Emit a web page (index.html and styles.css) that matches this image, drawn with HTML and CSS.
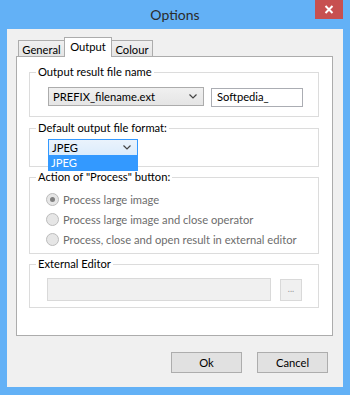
FILE: index.html
```html
<!DOCTYPE html>
<html>
<head>
<meta charset="utf-8">
<link rel="stylesheet" href="styles.css">
</head>
<body>
<div class="window">
  <div class="titlebar">
    <span></span>
    <span class="title">Options</span>
    <span class="close"><svg width="10" height="9" viewBox="0 0 10 9"><path d="M1.5 1 L8.5 8 M8.5 1 L1.5 8" stroke="#fff" stroke-width="2" fill="none"/></svg></span>
  </div>
  <div class="client">
    <div class="tabs">
      <div class="tab t-general">General</div>
      <div class="tab t-output active">Output</div>
      <div class="tab t-colour">Colour</div>
    </div>
    <div class="panel">
      <fieldset class="group g1">
        <legend>Output result file name</legend>
        <div class="body row">
          <div class="combo c-prefix"><span>PREFIX_filename.ext</span><svg class="chev" width="8" height="5" viewBox="0 0 8 5"><path d="M0.5 0.5 L4 4 L7.5 0.5" stroke="#444" stroke-width="1.2" fill="none"/></svg></div>
          <div class="textbox">Softpedia_</div>
        </div>
      </fieldset>
      <fieldset class="group g2">
        <legend>Default output file format:</legend>
        <div class="body">
          <div class="dropwrap">
            <div class="combo c-jpeg"><span>JPEG</span><svg class="chev" width="8" height="5" viewBox="0 0 8 5"><path d="M0.5 0.5 L4 4 L7.5 0.5" stroke="#444" stroke-width="1.2" fill="none"/></svg></div>
            <div class="droplist"><div class="item">JPEG</div></div>
          </div>
        </div>
      </fieldset>
      <fieldset class="group g3">
        <legend>Action of "Process" button:</legend>
        <div class="body">
          <div class="radio"><span class="dot checked"></span>Process large image</div>
          <div class="radio"><span class="dot"></span>Process large image and close operator</div>
          <div class="radio"><span class="dot"></span>Process, close and open result in external editor</div>
        </div>
      </fieldset>
      <fieldset class="group g4">
        <legend>External Editor</legend>
        <div class="body row">
          <div class="field"></div>
          <div class="browse">...</div>
        </div>
      </fieldset>
    </div>
    <div class="buttons">
      <div class="btn">Ok</div>
      <div class="btn">Cancel</div>
    </div>
  </div>
</div>
</body>
</html>
```
FILE: styles.css
```css
html, body {
  margin: 0;
  padding: 0;
}
body {
  font-family: Lato, "Noto Sans", sans-serif;
  font-size: 11.2px;
  color: #000;
  white-space: nowrap;
}
.window {
  width: 350px;
  height: 395px;
  box-sizing: border-box;
  background: #63b1f6;
  padding: 0 7px 8px 7px;
  display: flex;
  flex-direction: column;
}
.titlebar {
  height: 29px;
  display: grid;
  grid-template-columns: 1fr auto 1fr;
  align-items: start;
}
.title {
  font-size: 14px;
  color: #2b2b2b;
  line-height: 15px;
  padding-top: 7px;
}
.close {
  justify-self: end;
  width: 28px;
  height: 19px;
  background: #c75050;
  display: flex;
  align-items: center;
  justify-content: center;
}
.client {
  flex: 1;
  background: #f0f0f0;
  display: flex;
  flex-direction: column;
  padding: 8px 10px 14px 9px;
}
.tabs {
  display: flex;
  align-items: flex-end;
  height: 19px;
  margin-left: 2px;
  position: relative;
  z-index: 1;
}
.tab {
  box-sizing: border-box;
  height: 16px;
  border: 1px solid #acacac;
  border-bottom: none;
  background: linear-gradient(#f0f0f0, #e5e5e5);
  line-height: 17px;
  text-align: center;
}
.t-general { width: 46px; border-right: none; }
.t-colour { width: 41px; border-left: none; }
.t-output {
  width: 48px;
  height: 20px;
  margin-bottom: -1px;
  background: #fff;
  line-height: 17px;
}
.panel {
  flex: 1;
  background: #fff;
  border: 1px solid #acacac;
  padding: 7px 13px 0 12px;
  display: flex;
  flex-direction: column;
  gap: 2px;
}
.group {
  margin: 0;
  padding: 0;
  border: 1px solid #dcdcdc;
  min-width: 0;
}
.group legend {
  padding: 0 2px;
  margin-left: 6px;
  line-height: 16px;
}
.row {
  display: flex;
  align-items: flex-start;
}
.g1 .body { padding: 7px 0 9px 18px; }
.g2 .body { padding: 3px 0 10px 18px; }
.g3 .body { padding: 4px 0 4px 16px; }
.g4 .body { padding: 6px 0 6px 17px; }
.g2 { margin-top: 1px; }

.combo {
  box-sizing: border-box;
  height: 19px;
  border: 1px solid #acacac;
  background: linear-gradient(#f0f0f0, #e5e5e5);
  display: flex;
  align-items: center;
  justify-content: space-between;
  padding: 0 6px 0 4px;
  line-height: 16px;
}
.c-prefix { width: 156px; }
.textbox {
  box-sizing: border-box;
  width: 92px;
  height: 19px;
  margin-left: 7px;
  margin-top: 1px;
  border: 1px solid #abadb3;
  background: #fff;
  padding-left: 5px;
  line-height: 16px;
}
.dropwrap {
  position: relative;
  width: 90px;
}
.c-jpeg {
  width: 90px;
  height: 17px;
  border-color: #3399ff;
  background: linear-gradient(#eaf3fc, #dcecfc);
  padding-left: 3px;
}
.droplist {
  position: absolute;
  left: 0;
  top: 16px;
  width: 90px;
  box-sizing: border-box;
  border: 1px solid #3399ff;
  background: #3399ff;
  z-index: 2;
}
.droplist .item {
  color: #fff;
  line-height: 14px;
  padding-left: 2px;
}
.radio {
  height: 20px;
  display: flex;
  align-items: center;
  color: #6d6d6d;
}
.dot {
  box-sizing: border-box;
  width: 13px;
  height: 13px;
  border-radius: 50%;
  border: 1px solid #bcbcbc;
  background: #e6e6e6;
  margin-right: 4px;
  display: flex;
  align-items: center;
  justify-content: center;
}
.dot.checked::after {
  content: "";
  width: 5px;
  height: 5px;
  border-radius: 50%;
  background: #808080;
}
.field {
  box-sizing: border-box;
  width: 224px;
  height: 23px;
  background: #f0f0f0;
  border: 1px solid #d9d9d9;
}
.browse {
  box-sizing: border-box;
  width: 22px;
  height: 22px;
  margin-left: 9px;
  margin-top: 1px;
  background: #f0f0f0;
  border: 1px solid #d9d9d9;
  color: #999;
  font-size: 9px;
  text-align: center;
  line-height: 18px;
}
.buttons {
  display: flex;
  justify-content: flex-end;
  gap: 15px;
  margin-top: 16px;
  padding-right: 5px;
}
.btn {
  box-sizing: border-box;
  width: 71px;
  height: 21px;
  border: 1px solid #adadad;
  background: #e1e1e1;
  text-align: center;
  line-height: 19px;
}
```
